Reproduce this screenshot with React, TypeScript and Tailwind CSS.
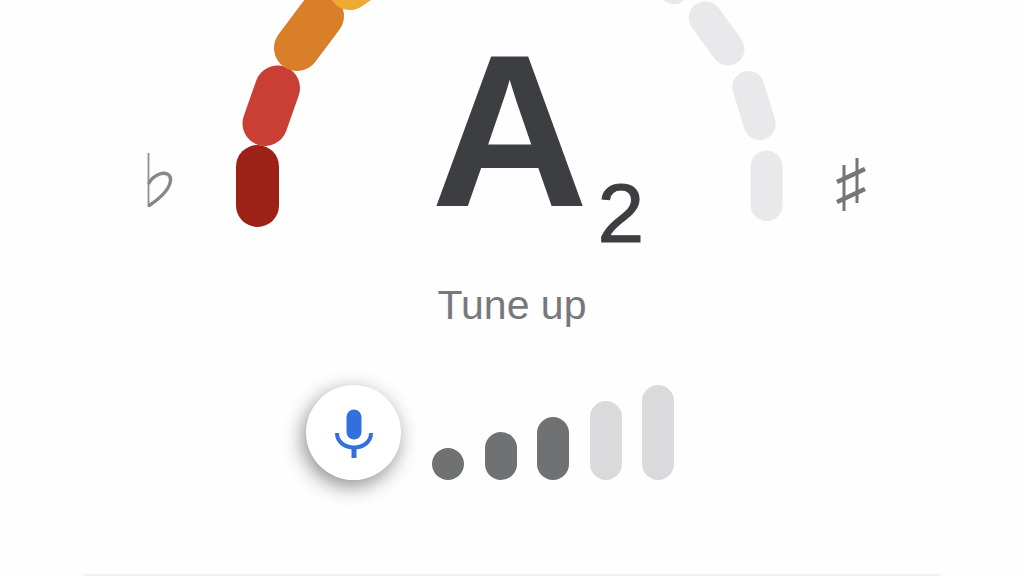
import React from 'react';

const arcSegments = [
    { x1: 257.5, y1: 166.5, x2: 257.5, y2: 205.5, width: 43, color: '#9c2218' },
    { x1: 277.5, y1: 88, x2: 265, y2: 123.5, width: 45, color: '#c93f33' },
    { x1: 321, y1: 16, x2: 297, y2: 48, width: 46, color: '#d97f29' },
    { x1: 375, y1: -30, x2: 350, y2: -12, width: 44, color: '#eeaa33' },
    { x1: 766.5, y1: 166.5, x2: 766.5, y2: 205, width: 32, color: '#e9e9eb' },
    { x1: 748.3, y1: 87, x2: 759.7, y2: 124, width: 32, color: '#e9e9eb' },
    { x1: 705.3, y1: 17.7, x2: 728, y2: 49, width: 33, color: '#e9e9eb' },
    { x1: 660, y1: -30, x2: 674, y2: -12, width: 32, color: '#e9e9eb' },
];

const levels = [
    { height: 'h-[32px]', color: 'bg-[#6f7173]' },
    { height: 'h-[48px]', color: 'bg-[#6f7173]' },
    { height: 'h-[63px]', color: 'bg-[#6f7173]' },
    { height: 'h-[79px]', color: 'bg-[#dadadd]' },
    { height: 'h-[95px]', color: 'bg-[#dadadd]' },
];

const App = () => {
    return (
        <div className="w-[1024px] h-[576px] overflow-hidden bg-[#fefefe] flex flex-col font-['Liberation_Sans',Arial,sans-serif]">
            {/* Tuner gauge with flat and sharp on either side */}
            <div className="flex items-start pl-[147px] h-[240px] shrink-0">
                <svg viewBox="0 0 26 56" className="w-[26px] h-[56px] mt-[153px] shrink-0" fill="none">
                    <path d="M1.5 0 L1.5 54" stroke="#8f9092" strokeWidth="1.8" />
                    <path d="M1.5 53 C9 48 23 38 23.5 27 C24 21 18 19 12.5 21 C7.5 23 3.5 26.5 1.5 31" stroke="#85878a" strokeWidth="3.4" />
                </svg>

                <div className="relative w-[560px] h-[240px] ml-[57px] shrink-0">
                    <svg viewBox="230 0 560 240" className="absolute inset-0 w-full h-full">
                        {arcSegments.map((s) => (
                            <line
                                key={`${s.x1}-${s.y1}`}
                                x1={s.x1}
                                y1={s.y1}
                                x2={s.x2}
                                y2={s.y2}
                                stroke={s.color}
                                strokeWidth={s.width}
                                strokeLinecap="round"
                            />
                        ))}
                    </svg>
                    <div className="relative flex items-start pl-[201px] pt-[22px] text-[#3c3e41]">
                        <span className="text-[218px] leading-[218px] font-bold">A</span>
                        <span className="text-[84px] leading-[85px] ml-[9px] mt-[149px] [-webkit-text-stroke:1px_#3c3e41]">2</span>
                    </div>
                </div>

                <svg viewBox="0 0 30 54" className="w-[30px] h-[54px] mt-[158px] ml-[46px] shrink-0" fill="none" stroke="#747577">
                    <path d="M8 7 L8 53 M21 0 L21 45" strokeWidth="3" />
                    <path d="M1 24 L29 11 M1 44 L29 31" strokeWidth="4.6" />
                </svg>
            </div>

            <div className="mt-[45px] text-center text-[41px] leading-[40px] text-[#77787b]">Tune up</div>

            {/* Mic button and input level */}
            <div className="mt-[60px] pl-[306px] flex items-end">
                <div className="w-[95px] h-[95px] rounded-full bg-white shadow-[-3px_6px_20px_rgba(0,0,0,0.45)] flex items-center justify-center">
                    <svg viewBox="0 0 40 50" className="w-[40px] h-[50px] mt-[2px]" fill="none">
                        <rect x="12.5" y="0.5" width="15" height="30" rx="7.5" fill="#3170dd" />
                        <path d="M3 24 C3 33 11 38.5 20 38.5 C29 38.5 37 33 37 24" stroke="#3170dd" strokeWidth="4" />
                        <path d="M20 38 L20 49" stroke="#3170dd" strokeWidth="5" />
                    </svg>
                </div>
                <div className="ml-[31px] flex items-end gap-[20.5px]">
                    {levels.map((level) => (
                        <div key={level.height} className={`w-[32px] rounded-full ${level.height} ${level.color}`} />
                    ))}
                </div>
            </div>

            <div className="mt-auto mx-[84px] h-[2px] bg-[#f0f0f2]" />
        </div>
    );
};

export default App;
